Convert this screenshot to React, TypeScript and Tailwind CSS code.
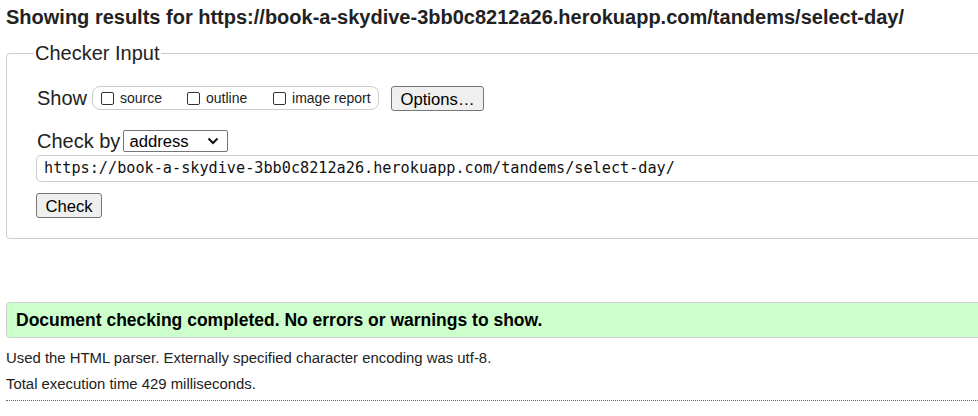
export default function App() {
  const sans = { fontFamily: '"Liberation Sans", Arial, sans-serif' };
  return (
    <div className="w-[978px] h-[416px] overflow-hidden bg-white text-[#222]" style={sans}>
      <div className="w-[1100px] pl-[6px]">
        <h2 className="text-[20px] font-bold leading-[22px] pt-[6px] m-0 text-[#222]">
          Showing results for https://book-a-skydive-3bb0c8212a26.herokuapp.com/tandems/select-day/
        </h2>
        <fieldset className="mt-[14px] border border-[#ccc] rounded-[4px] px-[30px] pb-[20px] pt-0">
          <legend className="text-[20px] px-[1px] -ml-[3px] leading-[22px] text-[#222]">Checker Input</legend>
          <div className="flex items-center mt-[21px] h-[26px]">
            <span className="text-[20px] mr-[5px]">Show</span>
            <div className="flex items-center border border-[#ccc] rounded-[8px] h-[24px] w-[287px] pl-[8px] text-[14px]">
              <label className="flex items-center w-[86px]">
                <span className="w-[13px] h-[13px] border border-[#333] rounded-[2px] mr-[6px] inline-block"></span>
                source
              </label>
              <label className="flex items-center w-[86px]">
                <span className="w-[13px] h-[13px] border border-[#333] rounded-[2px] mr-[6px] inline-block"></span>
                outline
              </label>
              <label className="flex items-center">
                <span className="w-[13px] h-[13px] border border-[#333] rounded-[2px] mr-[6px] inline-block"></span>
                image report
              </label>
            </div>
            <button className="ml-[12px] h-[25px] w-[93px] border border-[#767676] rounded-[3px] bg-[#efefef] text-[16.67px] text-black">
              Options…
            </button>
          </div>
          <div className="flex items-center mt-[18px] h-[24px]">
            <span className="text-[20px] mr-[3px]">Check by</span>
            <div className="flex items-center justify-between border border-[#767676] rounded-[2px] h-[22px] w-[105px] pl-[5px] pr-[8px] text-[16.67px] text-black">
              <span>address</span>
              <svg width="12" height="8" viewBox="0 0 12 8">
                <path d="M1.5 1.5 L6 6 L10.5 1.5" fill="none" stroke="#111" strokeWidth="2" />
              </svg>
            </div>
          </div>
          <div
            className="mt-[2px] -ml-[1px] h-[27px] border border-[#ccc] rounded-[5px] flex items-center pl-[7px] text-[15.2px] text-[#111]"
            style={{ fontFamily: '"DejaVu Sans Mono", monospace' }}
          >
            https://book-a-skydive-3bb0c8212a26.herokuapp.com/tandems/select-day/
          </div>
          <button className="mt-[11px] -ml-[1px] h-[25px] w-[66px] border border-[#767676] rounded-[3px] bg-[#efefef] text-[16.67px] text-black block">
            Check
          </button>
        </fieldset>
        <div className="mt-[63px] h-[36px] border border-[#ccc] rounded-[4px] bg-[#ccffcc] flex items-center pl-[9px]">
          <span className="text-[17.5px] font-bold text-black">Document checking completed. No errors or warnings to show.</span>
        </div>
        <p className="text-[14.9px] mt-[11px] leading-[18px] text-[#222]">Used the HTML parser. Externally specified character encoding was utf-8.</p>
        <p className="text-[14.9px] mt-[8px] leading-[18px] text-[#222]">Total execution time 429 milliseconds.</p>
        <div className="mt-[7px] border-t border-dotted border-[#666]"></div>
      </div>
    </div>
  );
}
